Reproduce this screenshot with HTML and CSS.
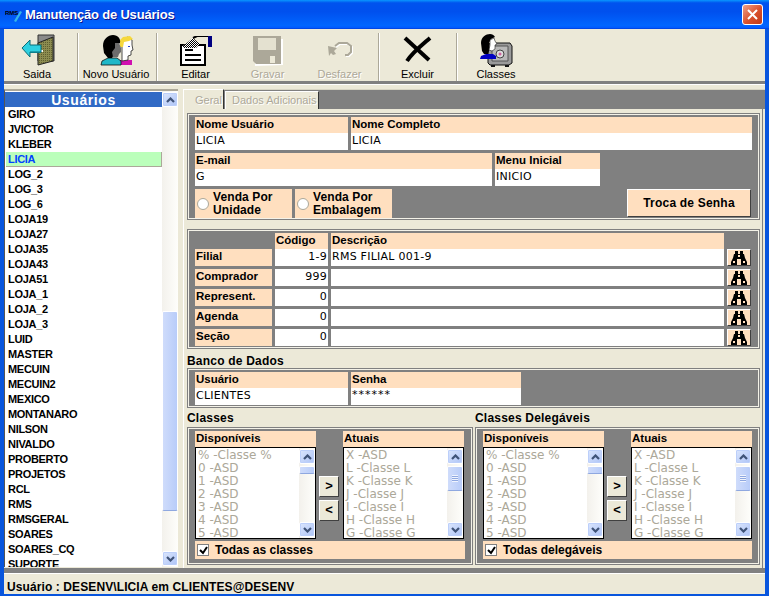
FILE: index.html
```html
<!DOCTYPE html>
<html lang="pt-BR">
  <head>
    <meta charset="UTF-8" />
    <title>Manutenção de Usuários</title>
    <link rel="stylesheet" href="styles.css">
  </head>
  <body>
    <svg class="defs" width="0" height="0">
      <defs>
        <pattern id="hatch" width="2" height="2" patternUnits="userSpaceOnUse">
          <rect width="2" height="2" fill="#8c8c50" />
          <rect width="1" height="1" fill="#5f5f30" />
        </pattern>
        <pattern id="dither" width="2" height="2" patternUnits="userSpaceOnUse">
          <rect width="2" height="2" fill="#fff" />
          <rect width="1" height="1" fill="#000" />
          <rect x="1" y="1" width="1" height="1" fill="#000" />
        </pattern>
        <symbol id="binoculars" viewBox="0 0 16 14">
          <path d="M4 0h3v3h2V0h3v3h1l1 4 2 4v3H10V8H6v6H0v-3l2-4 1-4h1z" fill="#000" />
          <path d="M2 10h2v2H2zM12 10h2v2h-2zM7 4h2v2H7z" fill="#ffdfbf" />
        </symbol>
        <symbol id="up" viewBox="0 0 9 6">
          <path d="M1 5l3.5-3.5L8 5" fill="none" stroke="#3f5378" stroke-width="2.2" />
        </symbol>
        <symbol id="down" viewBox="0 0 9 6">
          <path d="M1 1l3.5 3.5L8 1" fill="none" stroke="#3f5378" stroke-width="2.2" />
        </symbol>
      </defs>
    </svg>

    <div class="window">
      <div class="titlebar">
        <svg class="app-icon" width="18" height="16" viewBox="0 0 18 16">
          <path d="M9 14l6-10 2 1-6 10z" fill="#35b6e8" />
          <text x="0" y="8" class="app-icon-text">RMS</text>
        </svg>
        <span class="title">Manutenção de Usuários</span>
        <div class="close-btn">
          <svg width="11" height="11" viewBox="0 0 11 11">
            <path d="M1 1l9 9M10 1l-9 9" stroke="#fff" stroke-width="2" />
          </svg>
        </div>
      </div>

      <div class="frame">
        <div class="toolbar">
          <div class="tool tool-saida">
            <svg class="tool-icon" width="34" height="32" viewBox="0 0 34 32">
              <path d="M17 1h16v26H17z" fill="#8a8a8a" stroke="#333" />
              <path d="M17 9l15-6v24l-15 4z" fill="url(#hatch)" stroke="#222" />
              <rect x="20" y="16" width="2" height="2" fill="#fff" />
              <path d="M1 14l8-8v5h11v7H9v5z" fill="#2fd0e0" stroke="#0b6d78" />
              <path d="M9 18h11v1H9z" fill="#0b7f8c" />
            </svg>
            <span>Saida</span>
          </div>
          <div class="tool tool-novo">
            <svg class="tool-icon" width="34" height="32" viewBox="0 0 34 32">
              <path d="M19 26h13v5H19z" fill="#d010b0" />
              <path d="M22 5l6-2 4 3 0 5 1 5-2 1 0 4-3 1v4l-6 1z" fill="#fff" stroke="#222" stroke-width=".8" />
              <path d="M20 6l3-3 7-1 3 3-4 2-5 1-1 5-3 0z" fill="#f6d83c" />
              <path d="M28 12h2v1h-2z" fill="#2040d0" />
              <path d="M2 27l6-3h9l4 3v4H1z" fill="#20b8c8" stroke="#111" stroke-width=".8" />
              <path d="M3 12C3 5 8 1 13 1c5 0 8 4 7 8l-2 1-3 3v6l-3 5H8L4 19z" fill="#000" />
              <path d="M15 9l4 0 2 5 0 4-2 2-1 3h-5l-1-5 3-4z" fill="#6c6c6c" />
            </svg>
            <span>Novo Usuário</span>
          </div>
          <div class="tool tool-editar">
            <svg class="tool-icon" width="34" height="30" viewBox="0 0 34 30">
              <path d="M2 9h24v20H2z" fill="#fff" stroke="#000" stroke-width="2" />
              <path d="M6 14h8M6 19h16M6 24h16" stroke="#000" stroke-width="2" />
              <path d="M4 10l10-8 7 6-4 4H4z" fill="url(#dither)" />
              <path d="M14 2l4-2h11" fill="none" stroke="#000" stroke-width="2" />
              <path d="M29 0h4v11h-4z" fill="#000080" />
            </svg>
            <span>Editar</span>
          </div>
          <div class="tool tool-gravar disabled">
            <svg class="tool-icon" width="30" height="30" viewBox="0 0 30 30">
              <path d="M1 29V2h28v26z" fill="#fff" transform="translate(1 1)" />
              <path d="M0 0h28v28H3l-3-3z" fill="#aca899" />
              <path d="M5 2h18v12H5z" fill="#e4e1d0" />
              <path d="M17 20h5v7h-5z" fill="#ece9d8" />
            </svg>
            <span>Gravar</span>
          </div>
          <div class="tool tool-desfazer disabled">
            <svg class="tool-icon" width="26" height="18" viewBox="0 0 26 18">
              <path d="M1 5l9 2-3 3 2 3-3 1-2-2-2 3z" fill="#aca899" />
              <path d="M8 5l4-3h8l4 3v6l-3 3h-3" fill="none" stroke="#fff" stroke-width="2" transform="translate(1 1)" />
              <path d="M8 5l4-3h8l4 3v6l-3 3h-3" fill="none" stroke="#aca899" stroke-width="2" />
            </svg>
            <span>Desfazer</span>
          </div>
          <div class="tool tool-excluir">
            <svg class="tool-icon" width="30" height="28" viewBox="0 0 30 28">
              <path d="M2 2l24 22" stroke="#000" stroke-width="4" />
              <path d="M27 2C19 9 10 16 4 25" stroke="#000" stroke-width="4" fill="none" />
            </svg>
            <span>Excluir</span>
          </div>
          <div class="tool tool-classes">
            <svg class="tool-icon" width="34" height="33" viewBox="0 0 34 33">
              <path d="M11 9h20l2 3v17l-3 2H11l-2-2V12z" fill="#9a9a9a" stroke="#111" />
              <path d="M13 12h16v15H13z" fill="#b8b8b8" stroke="#555" />
              <circle cx="21" cy="20" r="4" fill="#ddd" stroke="#444" />
              <circle cx="21" cy="20" r="1.5" fill="#d060a0" />
              <path d="M12 31h4v2h-4zM26 31h4v2h-4z" fill="#111" />
              <path d="M2 22l5-2h7l3 2v3H1z" fill="#0000c0" />
              <path d="M2 9C2 3 7 0 11 0c2 0 4 1 5 3l-4 2-2 4 1 5-2 6H5L3 17z" fill="#000" />
              <path d="M11 6l4-2 1 3 2 3-2 1v4l-3 2-3-1 1-5z" fill="#fff" stroke="#222" stroke-width=".6" />
            </svg>
            <span>Classes</span>
          </div>
        </div>

        <div class="main">
          <div class="sidebar">
            <div class="user-list">
              <div class="user-list-head">Usuários</div>
              <div class="user-item">GIRO</div>
              <div class="user-item">JVICTOR</div>
              <div class="user-item">KLEBER</div>
              <div class="user-item selected">LICIA</div>
              <div class="user-item">LOG_2</div>
              <div class="user-item">LOG_3</div>
              <div class="user-item">LOG_6</div>
              <div class="user-item">LOJA19</div>
              <div class="user-item">LOJA27</div>
              <div class="user-item">LOJA35</div>
              <div class="user-item">LOJA43</div>
              <div class="user-item">LOJA51</div>
              <div class="user-item">LOJA_1</div>
              <div class="user-item">LOJA_2</div>
              <div class="user-item">LOJA_3</div>
              <div class="user-item">LUID</div>
              <div class="user-item">MASTER</div>
              <div class="user-item">MECUIN</div>
              <div class="user-item">MECUIN2</div>
              <div class="user-item">MEXICO</div>
              <div class="user-item">MONTANARO</div>
              <div class="user-item">NILSON</div>
              <div class="user-item">NIVALDO</div>
              <div class="user-item">PROBERTO</div>
              <div class="user-item">PROJETOS</div>
              <div class="user-item">RCL</div>
              <div class="user-item">RMS</div>
              <div class="user-item">RMSGERAL</div>
              <div class="user-item">SOARES</div>
              <div class="user-item">SOARES_CQ</div>
              <div class="user-item">SUPORTE</div>
            </div>
            <div class="scrollbar">
              <div class="sb-btn"><svg width="9" height="6"><use href="#up" /></svg></div>
              <div class="sb-track"><div class="sb-thumb thumb-users"></div></div>
              <div class="sb-btn"><svg width="9" height="6"><use href="#down" /></svg></div>
            </div>
          </div>

          <div class="tabs">
            <div class="tab-strip">
              <div class="tab active">Geral</div>
              <div class="tab">Dados Adicionais</div>
            </div>

            <div class="tab-body">
              <div class="panel panel-user">
                <div class="row">
                  <div class="field w-153"><div class="lbl">Nome Usuário</div><div class="val">LICIA</div></div>
                  <div class="field w-401"><div class="lbl">Nome Completo</div><div class="val">LICIA</div></div>
                </div>
                <div class="row">
                  <div class="field w-297"><div class="lbl">E-mail</div><div class="val">G</div></div>
                  <div class="field w-105"><div class="lbl">Menu Inicial</div><div class="val">INICIO</div></div>
                </div>
                <div class="row">
                  <div class="radio-box"><span class="radio"></span><span>Venda Por<br>Unidade</span></div>
                  <div class="radio-box"><span class="radio"></span><span>Venda Por<br>Embalagem</span></div>
                  <div class="raised-btn">Troca de Senha</div>
                </div>
              </div>

              <div class="panel panel-lookup">
                <div class="lookup-head">
                  <div class="lbl col-code">Código</div>
                  <div class="lbl col-desc">Descrição</div>
                </div>
                <div class="lookup-row">
                  <div class="lbl col-name">Filial</div>
                  <div class="val col-code num">1-9</div>
                  <div class="val col-desc">RMS FILIAL 001-9</div>
                  <div class="find-btn"><svg width="16" height="14"><use href="#binoculars" /></svg></div>
                </div>
                <div class="lookup-row">
                  <div class="lbl col-name">Comprador</div>
                  <div class="val col-code num">999</div>
                  <div class="val col-desc"></div>
                  <div class="find-btn"><svg width="16" height="14"><use href="#binoculars" /></svg></div>
                </div>
                <div class="lookup-row">
                  <div class="lbl col-name">Represent.</div>
                  <div class="val col-code num">0</div>
                  <div class="val col-desc"></div>
                  <div class="find-btn"><svg width="16" height="14"><use href="#binoculars" /></svg></div>
                </div>
                <div class="lookup-row">
                  <div class="lbl col-name">Agenda</div>
                  <div class="val col-code num">0</div>
                  <div class="val col-desc"></div>
                  <div class="find-btn"><svg width="16" height="14"><use href="#binoculars" /></svg></div>
                </div>
                <div class="lookup-row">
                  <div class="lbl col-name">Seção</div>
                  <div class="val col-code num">0</div>
                  <div class="val col-desc"></div>
                  <div class="find-btn"><svg width="16" height="14"><use href="#binoculars" /></svg></div>
                </div>
              </div>

              <div class="section-title">Banco de Dados</div>
              <div class="panel panel-db">
                <div class="row">
                  <div class="field w-153"><div class="lbl">Usuário</div><div class="val">CLIENTES</div></div>
                  <div class="field w-170"><div class="lbl">Senha</div><div class="val val-pass">******</div></div>
                </div>
              </div>

              <div class="class-cols">
                <div class="class-col">
                  <div class="section-title short">Classes</div>
                  <div class="panel panel-class">
                    <div class="pickers">
                      <div class="picker">
                        <div class="lbl">Disponíveis</div>
                        <div class="listbox">
                          <div class="list-items">
                            <div>% -Classe %</div><div>0 -ASD</div><div>1 -ASD</div><div>2 -ASD</div><div>3 -ASD</div><div>4 -ASD</div><div>5 -ASD</div>
                          </div>
                          <div class="scrollbar">
                            <div class="sb-btn"><svg width="9" height="6"><use href="#up" /></svg></div>
                            <div class="sb-track"><div class="sb-thumb thumb-small"></div></div>
                            <div class="sb-btn"><svg width="9" height="6"><use href="#down" /></svg></div>
                          </div>
                        </div>
                      </div>
                      <div class="move-btns"><div class="move-btn">&gt;</div><div class="move-btn">&lt;</div></div>
                      <div class="picker">
                        <div class="lbl">Atuais</div>
                        <div class="listbox">
                          <div class="list-items">
                            <div>X -ASD</div><div>L -Classe L</div><div>K -Classe K</div><div>J -Classe J</div><div>I -Classe I</div><div>H -Classe H</div><div>G -Classe G</div>
                          </div>
                          <div class="scrollbar">
                            <div class="sb-btn"><svg width="9" height="6"><use href="#up" /></svg></div>
                            <div class="sb-track"><div class="sb-thumb thumb-large"></div></div>
                            <div class="sb-btn"><svg width="9" height="6"><use href="#down" /></svg></div>
                          </div>
                        </div>
                      </div>
                    </div>
                    <div class="check-row">
                      <span class="check"><svg width="9" height="9" viewBox="0 0 9 9"><path d="M1 4l3 3 4-6" fill="none" stroke="#000" stroke-width="2" /></svg></span>
                      <span>Todas as classes</span>
                    </div>
                  </div>
                </div>

                <div class="class-col">
                  <div class="section-title short">Classes Delegáveis</div>
                  <div class="panel panel-class">
                    <div class="pickers">
                      <div class="picker">
                        <div class="lbl">Disponíveis</div>
                        <div class="listbox">
                          <div class="list-items">
                            <div>% -Classe %</div><div>0 -ASD</div><div>1 -ASD</div><div>2 -ASD</div><div>3 -ASD</div><div>4 -ASD</div><div>5 -ASD</div>
                          </div>
                          <div class="scrollbar">
                            <div class="sb-btn"><svg width="9" height="6"><use href="#up" /></svg></div>
                            <div class="sb-track"><div class="sb-thumb thumb-small"></div></div>
                            <div class="sb-btn"><svg width="9" height="6"><use href="#down" /></svg></div>
                          </div>
                        </div>
                      </div>
                      <div class="move-btns"><div class="move-btn">&gt;</div><div class="move-btn">&lt;</div></div>
                      <div class="picker">
                        <div class="lbl">Atuais</div>
                        <div class="listbox">
                          <div class="list-items">
                            <div>X -ASD</div><div>L -Classe L</div><div>K -Classe K</div><div>J -Classe J</div><div>I -Classe I</div><div>H -Classe H</div><div>G -Classe G</div>
                          </div>
                          <div class="scrollbar">
                            <div class="sb-btn"><svg width="9" height="6"><use href="#up" /></svg></div>
                            <div class="sb-track"><div class="sb-thumb thumb-large"></div></div>
                            <div class="sb-btn"><svg width="9" height="6"><use href="#down" /></svg></div>
                          </div>
                        </div>
                      </div>
                    </div>
                    <div class="check-row">
                      <span class="check"><svg width="9" height="9" viewBox="0 0 9 9"><path d="M1 4l3 3 4-6" fill="none" stroke="#000" stroke-width="2" /></svg></span>
                      <span>Todas delegáveis</span>
                    </div>
                  </div>
                </div>
              </div>
            </div>
          </div>
        </div>

        <div class="statusbar">Usuário : DESENV\LICIA em CLIENTES@DESENV</div>
      </div>
    </div>
  </body>
</html>
```

FILE: styles.css
```css
* {
  margin: 0;
  padding: 0;
  box-sizing: border-box;
}

body {
  font-family: "Liberation Sans", Arial, sans-serif;
  font-size: 11px;
  color: #000;
  background: #0855dd;
  overflow: hidden;
}

.defs {
  display: block;
  height: 0;
}

.window {
  width: 769px;
  height: 596px;
  display: flex;
  flex-direction: column;
  background: #0855dd;
}

/* title bar */
.titlebar {
  height: 29px;
  flex: none;
  display: flex;
  align-items: center;
  padding: 0 6px 0 5px;
  background: linear-gradient(#0997ff 0, #0053ee 10%, #0050ee 40%, #0066ff 88%, #005bff 95%, #003dd7 100%);
}

.app-icon {
  flex: none;
  margin-right: 2px;
}

.app-icon-text {
  font-size: 6px;
  font-weight: bold;
  fill: #000;
}

.title {
  flex: 1;
  color: #fff;
  font-size: 13px;
  font-weight: bold;
  letter-spacing: -0.2px;
  text-shadow: 1px 1px #0f1089;
}

.close-btn {
  width: 21px;
  height: 21px;
  display: flex;
  align-items: center;
  justify-content: center;
  border: 1px solid #fff;
  border-radius: 3px;
  background: linear-gradient(135deg, #f0a088, #d8502c 55%, #c03a18);
}

/* everything inside the window border */
.frame {
  flex: 1;
  display: flex;
  flex-direction: column;
  margin: 0 4px 2px;
  background: #ece9d8;
  min-height: 0;
}

.toolbar {
  height: 55px;
  flex: none;
  display: flex;
  border-bottom: 3px solid #808080;
  padding-top: 4px;
}

.tool {
  display: flex;
  flex-direction: column;
  align-items: center;
  height: 48px;
  border-right: 1px solid #aca899;
  box-shadow: 1px 0 #fff;
  position: relative;
}

.tool span {
  position: absolute;
  bottom: 0;
  left: 0;
  right: 0;
  text-align: center;
  line-height: 13px;
}

.tool-saida { width: 74px; }
.tool-novo { width: 79px; }
.tool-editar { width: 77px; border-right: none; box-shadow: none; }
.tool-gravar { width: 67px; border-right: none; box-shadow: none; }
.tool-desfazer { width: 78px; }
.tool-excluir { width: 78px; }
.tool-classes { width: 78px; border-right: none; box-shadow: none; }

.tool-saida span { right: 7px; }
.tool-novo span { right: 2px; }

.tool.disabled span {
  color: #aca899;
  text-shadow: 1px 1px #fff;
}

.tool-saida .tool-icon { margin: 1px 0 0 -5px; }
.tool-novo .tool-icon { margin: 1px 0 0 0; }
.tool-editar .tool-icon { margin: 3px 0 0 0; }
.tool-gravar .tool-icon { margin: 3px 0 0 0; }
.tool-desfazer .tool-icon { margin: 8px 0 0 0; }
.tool-excluir .tool-icon { margin: 3px 0 0 0; }
.tool-classes .tool-icon { margin: 1px 0 0 0; }

.main {
  flex: 1;
  display: flex;
  min-height: 0;
  padding-top: 4px;
  border-top: 1px solid #fff;
}

/* user list */
.sidebar {
  width: 174px;
  flex: none;
  display: flex;
  margin-bottom: 1px;
  border-top: 2px solid #aca899;
  border-left: 1px solid #555;
}

.user-list {
  width: 157px;
  flex: none;
  background: #fff;
  overflow: hidden;
}

.user-list-head {
  height: 15px;
  margin-top: 1px;
  background: #316ac5;
  color: #fff;
  font-size: 14px;
  font-weight: bold;
  line-height: 16px;
  letter-spacing: 0.6px;
  text-align: center;
}

.user-item {
  height: 15px;
  line-height: 15px;
  padding-left: 3px;
  font-size: 11px;
  font-weight: bold;
  letter-spacing: -0.3px;
}

.user-item.selected {
  margin-left: 1px;
  padding-left: 2px;
  background: #bbffbb;
  color: #0044ff;
  border-right: 1px solid #aca899;
  border-bottom: 1px solid #aca899;
}

.scrollbar {
  width: 16px;
  flex: none;
  display: flex;
  flex-direction: column;
  padding: 1px 0;
  background: linear-gradient(90deg, #f3f1ec, #fefefb);
}

.sb-btn {
  height: 15px;
  flex: none;
  display: flex;
  align-items: center;
  justify-content: center;
  border: 1px solid #fff;
  border-radius: 2px;
  background: linear-gradient(135deg, #dbe6fd, #aec4f6);
  box-shadow: inset 0 0 0 1px #bccffa;
}

.sb-track {
  flex: 1;
  min-height: 0;
}

.sb-thumb {
  border: 1px solid #fff;
  border-bottom-color: #8fa8e0;
  border-radius: 2px;
  background: linear-gradient(90deg, #cfdcfb, #b8ccf9);
}

.thumb-users {
  height: 200px;
  margin-top: 204px;
}

.thumb-small {
  height: 8px;
  margin-top: 2px;
}

.thumb-large {
  height: 25px;
  margin-top: 2px;
  display: flex;
  align-items: center;
  justify-content: center;
}

.thumb-large::before {
  content: "";
  width: 6px;
  height: 7px;
  background: repeating-linear-gradient(#f0f4fe 0 1px, #8fa8e0 1px 2px);
}

/* tabs */
.tabs {
  flex: 1;
  min-width: 0;
  display: flex;
  flex-direction: column;
  margin-left: 5px;
}

.tab-strip {
  height: 20px;
  flex: none;
  display: flex;
  align-items: flex-end;
  background: #808080;
  border-top: 1px solid #d8d5c4;
}

.tab {
  height: 18px;
  padding: 0 6px;
  line-height: 17px;
  color: #aca899;
  font-size: 11px;
  text-shadow: 1px 1px #fff;
  background: #ece9d8;
  border: 1px solid #fff;
  border-right: 1px solid #333;
  border-bottom: none;
  margin-left: 1px;
  width: 94px;
  white-space: nowrap;
}

.tab.active {
  width: 41px;
  height: 20px;
  margin-left: 0;
  padding-left: 11px;
  line-height: 21px;
  border-right: 1px solid #333;
}

.tab-body {
  flex: 1;
  padding: 5px 3px 0 4px;
  border-left: 1px solid #fff;
  border-right: 1px solid #808080;
  margin-right: 2px;
}

.panel {
  border: 1px solid #f4f2e8;
  box-shadow: 0 0 0 1px #808080;
  background: #808080;
  padding: 2px 6px 1px;
}

.panel-user {
  height: 105px;
}

.panel-lookup {
  height: 118px;
  margin-top: 11px;
}

.panel-db {
  height: 38px;
}

.row {
  display: flex;
  gap: 3px;
}

.row + .row {
  margin-top: 3px;
}

.lbl {
  height: 16px;
  line-height: 15px;
  padding-left: 1px;
  background: #ffdfbf;
  font-size: 11.5px;
  font-weight: bold;
  white-space: nowrap;
}

.val {
  height: 17px;
  line-height: 16px;
  padding-left: 1px;
  background: #fff;
  font-family: "DejaVu Sans", sans-serif;
  font-size: 11px;
  letter-spacing: 0.25px;
  white-space: nowrap;
  overflow: hidden;
}

.val-pass {
  line-height: 14px;
  letter-spacing: 1px;
}

.w-153 { width: 153px; }
.w-401 { width: 401px; }
.w-297 { width: 297px; }
.w-105 { width: 105px; }
.w-170 { width: 170px; }

.radio-box {
  width: 97px;
  height: 29px;
  display: flex;
  align-items: center;
  gap: 4px;
  padding-left: 2px;
  background: #ffdfbf;
  font-size: 12px;
  font-weight: bold;
  line-height: 13px;
  letter-spacing: 0.1px;
}

.radio {
  width: 12px;
  height: 12px;
  flex: none;
  border-radius: 50%;
  background: #fff;
  border: 1px solid #aca899;
}

.raised-btn {
  width: 124px;
  height: 28px;
  margin: 0 1px 0 auto;
  text-align: center;
  line-height: 26px;
  background: #ffdfbf;
  font-size: 12px;
  font-weight: bold;
  letter-spacing: 0.2px;
  border: 1px solid;
  border-color: #fff #404040 #404040 #fff;
}

/* filial / comprador rows */
.lookup-head,
.lookup-row {
  display: flex;
  gap: 3px;
}

.lookup-head {
  padding-left: 80px;
  height: 16px;
}

.lookup-row {
  margin-bottom: 3px;
}

.col-name { width: 77px; height: 17px; }
.col-code { width: 53px; }
.col-desc { width: 393px; }

.num {
  text-align: right;
  padding: 0 1px 0 0;
}

.find-btn {
  width: 24px;
  height: 17px;
  display: flex;
  align-items: center;
  justify-content: center;
  background: #ffdfbf;
  border: 1px solid;
  border-color: #fff #404040 #404040 #fff;
}

.section-title {
  height: 20px;
  margin: 1px 0 0 -1px;
  padding-top: 5px;
  line-height: 14px;
  font-size: 12px;
  font-weight: bold;
  letter-spacing: 0.2px;
}

.section-title.short {
  height: 20px;
  margin-top: 0;
  padding-top: 3px;
}

/* classes */
.class-cols {
  display: flex;
  gap: 4px;
  margin-top: 1px;
}

.class-col {
  width: 284px;
}

.class-col + .class-col {
  width: 283px;
}

.panel-class {
  height: 136px;
}

.pickers {
  display: flex;
  align-items: flex-start;
}

.picker {
  width: 121px;
  flex: none;
}

.picker .lbl {
  line-height: 14px;
}

.listbox {
  height: 92px;
  display: flex;
  border: 1px solid #000;
  background: #fff;
  overflow: hidden;
}

.list-items {
  flex: 1;
  min-width: 0;
  padding: 1px 0 0 2px;
  color: #aca899;
  font-family: "DejaVu Sans", sans-serif;
  font-size: 12px;
  line-height: 13px;
  white-space: nowrap;
  overflow: hidden;
}

.move-btns {
  width: 27px;
  flex: none;
  display: flex;
  flex-direction: column;
  gap: 3px;
  padding: 45px 4px 0 3px;
}

.move-btn {
  height: 21px;
  line-height: 18px;
  text-align: center;
  font-size: 13px;
  font-weight: bold;
  background: #ece9d8;
  border: 1px solid;
  border-color: #fff #404040 #404040 #fff;
}

.check-row {
  height: 18px;
  display: flex;
  align-items: center;
  gap: 6px;
  margin-top: 2px;
  padding-left: 2px;
  background: #ffdfbf;
  font-size: 12px;
  font-weight: bold;
}

.check {
  width: 12px;
  height: 12px;
  flex: none;
  display: flex;
  align-items: center;
  justify-content: center;
  background: #fff;
  border: 1px solid #808080;
}

/* status bar */
.statusbar {
  height: 26px;
  flex: none;
  padding: 8px 0 0 3px;
  border-top: 5px solid #808080;
  box-shadow: inset 0 1px #fff;
  line-height: 12px;
  font-size: 12px;
  font-weight: bold;
  letter-spacing: 0.1px;
  white-space: nowrap;
}
```
